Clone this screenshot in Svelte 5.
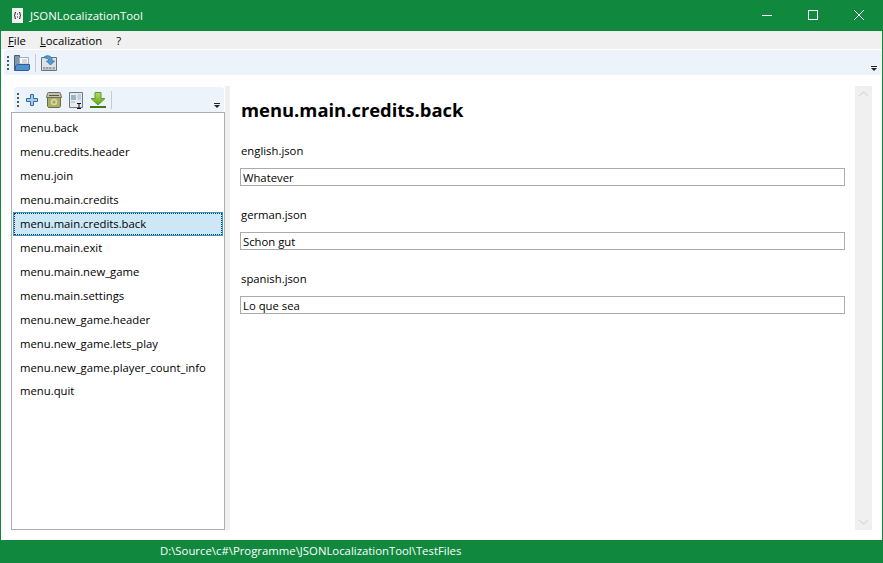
<script>
  let keys = [
    'menu.back', 'menu.credits.header', 'menu.join', 'menu.main.credits', 'menu.main.credits.back',
    'menu.main.exit', 'menu.main.new_game', 'menu.main.settings', 'menu.new_game.header',
    'menu.new_game.lets_play', 'menu.new_game.player_count_info', 'menu.quit'
  ];
  let selected = $state('menu.main.credits.back');
  let fields = [
    { file: 'english.json', value: 'Whatever' },
    { file: 'german.json', value: 'Schon gut' },
    { file: 'spanish.json', value: 'Lo que sea' }
  ];
</script>

<div class="window">
  <header class="titlebar">
    <svg class="app-icon" width="11" height="15" viewBox="0 0 11 15">
      <rect x="0" y="0" width="11" height="15" fill="#f2f2f2" />
      <path d="M4 4.500H3V7L2 7.500L3 8V10.500H4M7 4.500H8V7L9 7.500L8 8V10.500H7" fill="none" stroke="#333" />
      <path d="M5.500 5V7M5.500 8V10" stroke="#888" />
    </svg>
    <span class="title">JSONLocalizationTool</span>
    <div class="controls">
      <svg width="46" height="31" viewBox="0 0 46 31"><path d="M18 15.500H28" stroke="#fff" /></svg>
      <svg width="46" height="31" viewBox="0 0 46 31"><rect x="18.500" y="10.500" width="9" height="9" fill="none" stroke="#fff" /></svg>
      <svg width="46" height="31" viewBox="0 0 46 31"><path d="M18 10L28 20M28 10L18 20" stroke="#fff" /></svg>
    </div>
  </header>

  <nav class="menubar">
    <span><u>F</u>ile</span>
    <span><u>L</u>ocalization</span>
    <span>?</span>
  </nav>

  <div class="toolbar main-toolbar">
    <span class="grip"></span>
    <svg width="18" height="18" viewBox="0 0 18 18">
      <path d="M1.500 1.500H6.500V3.500H8V16.500H1.500Z" fill="#8296ab" stroke="#4c5f72" />
      <path d="M6.500 3.500H15.500V10H6.500Z" fill="#fbfbfb" stroke="#a4aeb8" />
      <path d="M9 6H14M9 8H14" stroke="#a9b6c2" />
      <path d="M4.500 10.500H16.500V15L15.500 16.500H2.500V12Z" fill="#4f90cf" stroke="#2c5f92" />
    </svg>
    <span class="sep"></span>
    <svg width="18" height="18" viewBox="0 0 18 18">
      <path d="M1.500 3.500H16.500V16.500H1.500Z" fill="#dfe2e4" stroke="#68727a" />
      <path d="M3 13H15V15.500H3Z" fill="#9aa2a8" />
      <path d="M5 14H6M8 14H9M11 14H13" stroke="#e8e8e8" />
      <path d="M3.500 3.500C6 1 11 1 12 5V7H14.500L10.500 11L6.500 7H9C9 4.500 6 4 3.500 3.500Z" fill="#4d9fd6" stroke="#2b6a9e" stroke-width="0.8" />
    </svg>
    <span class="overflow"></span>
  </div>

  <main class="body">
    <section class="keys">
      <div class="toolbar keys-toolbar">
        <span class="grip"></span>
        <svg width="18" height="18" viewBox="0 0 18 18">
          <path d="M7.500 3.500H10.500V7.500H14.500V10.500H10.500V14.500H7.500V10.500H3.500V7.500H7.500Z" fill="#a9cbea" stroke="#2f6ea8" />
        </svg>
        <svg width="18" height="18" viewBox="0 0 18 18">
          <path d="M2.500 6.500H15.500V15L14.500 16.500H3.500L2.500 15Z" fill="#a9ad68" stroke="#6a6e3c" />
          <path d="M2.500 2.500Q2.500 1.500 3.500 1.500H14.500Q15.500 1.500 15.500 2.500L16.500 6.500H1.500Z" fill="#c4c4ae" stroke="#6c6c5a" />
          <path d="M4 4.500H14" stroke="#55554a" />
          <circle cx="9" cy="11" r="2.500" fill="none" stroke="#d6dca0" stroke-width="1.500" />
        </svg>
        <svg width="18" height="18" viewBox="0 0 18 18">
          <path d="M2.500 1.500H15.500V16.500H2.500Z" fill="#e6ebef" stroke="#6d7a86" />
          <path d="M4 4H9V9H4Z" fill="#9db3c8" />
          <path d="M4 11H8M10.500 4H14M10.500 6H14M10.500 8H14" stroke="#9db3c8" />
          <path d="M10 12.500H14M12 12.500V17.500M10 17.500H14" stroke="#111" fill="none" />
        </svg>
        <svg width="18" height="18" viewBox="0 0 18 18">
          <defs>
            <linearGradient id="arrow" x1="0" y1="0" x2="0" y2="1">
              <stop offset="0" stop-color="#b5dc62" />
              <stop offset="1" stop-color="#5da51f" />
            </linearGradient>
          </defs>
          <path d="M6 1.500H12V7.500H16L9 14L2 7.500H6Z" fill="url(#arrow)" stroke="#5c9a28" />
          <path d="M1 16H17" stroke="#3f7a10" stroke-width="2" />
        </svg>
        <span class="sep"></span>
        <span class="overflow"></span>
      </div>
      <ul class="list">
        {#each keys as key}
          <li class:selected={key === selected} onclick={() => selected = key}><span>{key}</span></li>
        {/each}
      </ul>
    </section>

    <section class="editor">
      <h1>{selected}</h1>
      {#each fields as field}
        <div class="field">
          <label for={field.file}>{field.file}</label>
          <input id={field.file} value={field.value} />
        </div>
      {/each}
    </section>

    <div class="scrollbar">
      <svg width="17" height="17" viewBox="0 0 17 17"><path d="M4 10L8.500 6L13 10" fill="none" stroke="#dcdcdc" stroke-width="1.500" /></svg>
      <svg width="17" height="17" viewBox="0 0 17 17"><path d="M4 7L8.500 11L13 7" fill="none" stroke="#dcdcdc" stroke-width="1.500" /></svg>
    </div>
  </main>

  <footer class="statusbar">D:\Source\c#\Programme\JSONLocalizationTool\TestFiles</footer>
</div>

<style>
  :global(body) {
    margin: 0;
    background: #fff;
  }
  .window {
    width: 883px;
    height: 563px;
    box-sizing: border-box;
    display: flex;
    flex-direction: column;
    border: 1px solid #10893e;
    border-top: 0;
    font-family: "Open Sans", "Noto Sans", sans-serif;
    font-size: 11.3px;
    color: #000;
    overflow: hidden;
  }
  .titlebar {
    height: 31px;
    flex: none;
    display: flex;
    align-items: center;
    background: #10893e;
    color: #fff;
    padding-left: 11px;
  }
  .app-icon {
    margin-right: 7px;
  }
  .title {
    font-size: 11.45px;
  }
  .controls {
    margin-left: auto;
    display: flex;
    height: 31px;
  }
  .menubar {
    height: 18px;
    flex: none;
    display: flex;
    align-items: center;
    gap: 14px;
    padding-left: 7px;
    background: #f0f0f0;
  }
  .toolbar {
    position: relative;
    display: flex;
    align-items: center;
    box-sizing: border-box;
    background: #ecf3fb;
    border-radius: 3px;
  }
  .main-toolbar {
    height: 25px;
    flex: none;
    margin: 1px 1px 0 3px;
    padding-left: 3px;
    gap: 4px;
  }
  .grip {
    width: 2px;
    height: 14px;
    background: repeating-linear-gradient(#555 0 2px, transparent 2px 4px);
  }
  .sep {
    width: 1px;
    height: 18px;
    background: #c5cbd2;
  }
  .overflow {
    position: absolute;
    right: 4px;
    bottom: 4px;
    width: 0;
    height: 0;
    border: 3px solid transparent;
    border-top: 3px solid #222;
    border-bottom: 0;
  }
  .overflow::before {
    content: '';
    position: absolute;
    left: -3px;
    top: -5px;
    width: 6px;
    height: 1px;
    background: #222;
  }
  .body {
    flex: 1;
    min-height: 0;
    display: flex;
    padding: 11px 10px 10px 10px;
  }
  .keys {
    width: 214px;
    flex: none;
    display: flex;
    flex-direction: column;
    border-right: 5px solid #f0f0f0;
  }
  .keys-toolbar {
    height: 25px;
    flex: none;
    margin: 1px 1px 0 3px;
    padding-left: 3px;
    gap: 4px;
  }
  .list {
    flex: 1;
    margin: 0;
    padding: 3px 1px;
    list-style: none;
    border: 1px solid #acacb2;
  }
  .list li {
    height: 24px;
    box-sizing: border-box;
    padding: 0 5px 2px 6px;
    display: flex;
    align-items: center;
    border: 1px solid transparent;
  }
  .list li:last-child {
    height: 22px;
  }
  .list li.selected {
    background: #cce8f6;
    border-color: #26a0da;
    outline: 1px dotted #333;
    outline-offset: -2px;
  }
  .editor {
    flex: 1;
    min-width: 0;
    padding: 0 10px;
  }
  h1 {
    margin: 11px 0 19px;
    padding-left: 1px;
    font-size: 18.4px;
    line-height: 26px;
    font-weight: 700;
  }
  .field {
    display: flex;
    flex-direction: column;
    gap: 8px;
    margin-bottom: 20px;
  }
  label {
    padding-left: 1px;
    line-height: 17px;
    height: 18px;
  }
  input {
    height: 18px;
    box-sizing: border-box;
    margin: 0;
    padding: 0 2px;
    border: 1px solid #ababab;
    border-radius: 0;
    background: #fff;
    font: inherit;
    color: #000;
    outline: none;
  }
  .scrollbar {
    width: 17px;
    flex: none;
    display: flex;
    flex-direction: column;
    justify-content: space-between;
    background: #f0f0f0;
  }
  .statusbar {
    height: 22px;
    flex: none;
    box-sizing: border-box;
    padding-left: 159px;
    font-size: 11.35px;
    line-height: 22px;
    background: #10893e;
    color: #fff;
  }
</style>
